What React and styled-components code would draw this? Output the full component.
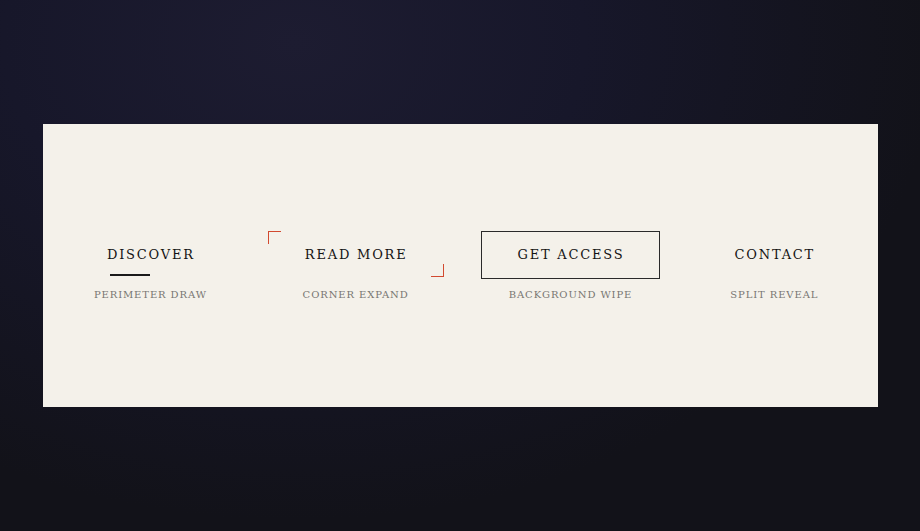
import React from "react";
import styled, { createGlobalStyle, css } from "styled-components";

const GlobalStyle = createGlobalStyle`
  html, body {
    margin: 0;
    padding: 0;
    height: 100%;
  }
  body {
    background: radial-gradient(ellipse 70% 90% at 32% 8%, #1d1c31 0%, #17172a 45%, #121219 100%);
    font-family: "DejaVu Serif", serif;
  }
  #root {
    min-height: 100vh;
    display: flex;
    align-items: center;
    justify-content: center;
  }
`;

const Panel = styled.div`
  width: 835px;
  height: 283px;
  background: #f4f1ea;
  display: flex;
  align-items: center;
  justify-content: center;
  gap: 39px;
  box-sizing: border-box;
  padding-top: 1px;
  padding-left: 1px;
`;

const Item = styled.div`
  display: flex;
  flex-direction: column;
  align-items: center;
  gap: 9px;
`;

const Button = styled.button`
  position: relative;
  background: transparent;
  border: 1px solid transparent;
  padding: 14px 34px 14px 35px;
  font-family: "DejaVu Serif", serif;
  font-size: 13px;
  letter-spacing: 1.8px;
  color: #141414;
  text-transform: uppercase;
  cursor: pointer;
  line-height: 18px;

  ${(p) =>
    p.$boxed &&
    css`
      border-color: #2a2a2a;
    `}
`;

const Underline = styled.span`
  position: absolute;
  left: 38px;
  bottom: 2px;
  width: 40px;
  height: 1.5px;
  background: #1a1a1a;
`;

const Corner = styled.span`
  position: absolute;
  width: 12px;
  height: 12px;
  border-color: #d24a30;
  border-style: solid;
  border-width: 0;

  ${(p) =>
    p.$pos === "tl"
      ? css`
          top: -1px;
          left: -2px;
          border-top-width: 1.5px;
          border-left-width: 1.5px;
        `
      : css`
          bottom: 1px;
          right: -3px;
          border-bottom-width: 1.5px;
          border-right-width: 1.5px;
        `}
`;

const Label = styled.span`
  font-family: "DejaVu Serif", serif;
  font-size: 10px;
  letter-spacing: 0.9px;
  color: #787672;
  text-transform: uppercase;
  line-height: 14px;
`;

export default function App() {
  return (
    <>
      <GlobalStyle />
      <Panel>
        <Item>
          <Button>
            Discover
            <Underline />
          </Button>
          <Label>Perimeter Draw</Label>
        </Item>
        <Item>
          <Button>
            <Corner $pos="tl" />
            Read More
            <Corner $pos="br" />
          </Button>
          <Label>Corner Expand</Label>
        </Item>
        <Item>
          <Button $boxed>Get Access</Button>
          <Label>Background Wipe</Label>
        </Item>
        <Item>
          <Button>Contact</Button>
          <Label>Split Reveal</Label>
        </Item>
      </Panel>
    </>
  );
}
